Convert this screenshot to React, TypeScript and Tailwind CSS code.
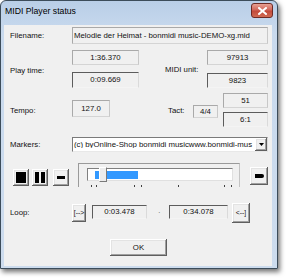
const font = "font-['Liberation_Sans',Arial,sans-serif]";

function Flat({ w, h, children, left }: { w: number; h: number; children?: React.ReactNode; left?: boolean }) {
  return (
    <div
      className={`flex items-center border border-t-[#a9a9a9] border-l-[#a9a9a9] border-r-[#c8c8c8] border-b-[#d4d4d4] bg-[#f0f0f0] leading-none whitespace-nowrap overflow-hidden ${left ? "justify-start pl-[1px]" : "justify-center"}`}
      style={{ width: w, height: h }}
    >
      {children}
    </div>
  );
}

function Sunken({ w, h, children }: { w: number; h: number; children?: React.ReactNode }) {
  return (
    <div
      className="flex items-center justify-center border border-t-[#5c5c5c] border-l-[#5c5c5c] border-r-[#dadada] border-b-[#f4f4f4] bg-[#f0f0f0] leading-none whitespace-nowrap"
      style={{ width: w, height: h }}
    >
      {children}
    </div>
  );
}

function Btn({ w, h, children }: { w: number; h: number; children?: React.ReactNode }) {
  return (
    <div
      className="flex items-center justify-center bg-[#f0f0f0] leading-none shadow-[inset_-1px_-1px_0_#5f5f5f,inset_1px_1px_0_#ffffff,inset_-2px_-2px_0_#a0a0a0,inset_2px_2px_0_#e3e3e3]"
      style={{ width: w, height: h }}
    >
      {children}
    </div>
  );
}

function Slider() {
  const ticks = [12, 17, 55, 62, 99, 145, 152];
  return (
    <div className="relative w-[162px] h-[24px] border-t border-l border-r border-t-[#9a9a9a] border-l-[#9a9a9a] border-r-[#c4c4c4]">
      <div className="relative ml-[8px] mt-[4px] w-[146px] h-[13px] bg-white border border-t-[#808080] border-l-[#808080] border-r-[#e0e0e0] border-b-[#e0e0e0]">
        <div className="ml-[7px] mt-[2px] w-[43px] h-[8px] bg-[#3399ff]" />
        <div className="absolute left-[11px] top-[-2px] w-[8px] h-[15px] bg-[#ececec] border border-t-[#ffffff] border-l-[#ffffff] border-r-[#7a7a7a] border-b-[#7a7a7a]" />
      </div>
      {ticks.map((x) => (
        <div key={x} className="absolute top-[21px] w-[1px] h-[2px] bg-[#404040]" style={{ left: x }} />
      ))}
    </div>
  );
}

export default function App() {
  return (
    <div className={`${font} w-[287px] h-[278px] bg-white overflow-hidden`}>
      <div className="w-[278px] h-[269px] rounded-t-[6px] border border-[#3c4c5a] bg-[linear-gradient(180deg,#b9cee7_0%,#c9daee_12%,#cddcee_100%)] shadow-[2px_3px_5px_rgba(0,0,0,0.55)] flex flex-col">
        <div className="h-[24px] flex items-start justify-between pl-[4px] pr-[4px]">
          <span className="mt-[6px] text-[8.7px] leading-none text-black">MIDI Player status</span>
          <div className="mt-[2px] w-[22px] h-[15px] rounded-[3px] border border-[#6e2a24] bg-[linear-gradient(180deg,#e8a093_0%,#d2675a_45%,#c24a3b_55%,#d06a52_100%)] flex items-center justify-center">
            <svg width="9" height="8" viewBox="0 0 9 8">
              <path d="M1 1 L8 7 M8 1 L1 7" stroke="#ffffff" strokeWidth="2" strokeLinecap="square" />
            </svg>
          </div>
        </div>
        <div className="ml-[3px] w-[268px] h-[241px] bg-[#f0f0f0] text-[7.8px] text-[#111111]">
          <div className="flex flex-col pt-[2px]">
            <div className="flex items-center h-[17px]">
              <div className="w-[68px] pl-[6px] leading-none">Filename:</div>
              <Flat w={196} h={17} left>
                Melodie der Heimat - bonmidi music-DEMO-xg.mid
              </Flat>
            </div>

            <div className="flex mt-[6px] h-[38px]">
              <div className="w-[68px] pl-[6px] mt-[17px] leading-none">Play time:</div>
              <div className="flex flex-col gap-[7px]">
                <Flat w={67} h={15}>1:36.370</Flat>
                <Sunken w={67} h={16}>0:09.669</Sunken>
              </div>
              <div className="ml-[26px] mt-[16px] w-[42px] leading-none">MIDI unit:</div>
              <div className="flex flex-col gap-[8px]">
                <Flat w={61} h={15}>97913</Flat>
                <Sunken w={61} h={15}>9823</Sunken>
              </div>
            </div>

            <div className="flex mt-[5px] h-[34px]">
              <div className="w-[68px] pl-[6px] mt-[14px] leading-none">Tempo:</div>
              <div className="mt-[7px]">
                <Flat w={38} h={17}>127.0</Flat>
              </div>
              <div className="ml-[58px] mt-[14px] w-[25px] leading-none">Tact:</div>
              <div className="mt-[12px]">
                <Flat w={25} h={13}>4/4</Flat>
              </div>
              <div className="ml-[5px] flex flex-col gap-[4px]">
                <Flat w={45} h={15}>51</Flat>
                <Sunken w={45} h={15}>6:1</Sunken>
              </div>
            </div>

            <div className="flex items-center mt-[10px] h-[15px]">
              <div className="w-[68px] pl-[6px] leading-none">Markers:</div>
              <div className="flex items-center w-[196px] h-[15px] bg-white border border-t-[#7a7a7a] border-l-[#7a7a7a] border-r-[#dcdcdc] border-b-[#e8e8e8]">
                <div className="flex-1 overflow-hidden whitespace-nowrap pl-[1px] leading-none">
                  (c) byOnline-Shop bonmidi musicwww.bonmidi-mus
                </div>
                <Btn w={12} h={13}>
                  <svg width="5" height="3" viewBox="0 0 5 3">
                    <path d="M0 0 H5 L2.5 3 Z" fill="#000000" />
                  </svg>
                </Btn>
              </div>
            </div>

            <div className="flex mt-[11px] h-[24px]">
              <div className="ml-[9px] mt-[6px]">
                <Btn w={16} h={17}>
                  <div className="w-[10px] h-[11px] bg-black" />
                </Btn>
              </div>
              <div className="ml-[3px] mt-[6px]">
                <Btn w={16} h={17}>
                  <div className="flex gap-[2px]">
                    <div className="w-[4px] h-[11px] bg-black" />
                    <div className="w-[4px] h-[11px] bg-black" />
                  </div>
                </Btn>
              </div>
              <div className="ml-[5px] mt-[6px]">
                <Btn w={16} h={17}>
                  <div className="w-[8px] h-[3px] bg-black" />
                </Btn>
              </div>
              <div className="ml-[9px]">
                <Slider />
              </div>
              <div className="ml-[10px] mt-[4px]">
                <Btn w={18} h={18}>
                  <div className="w-[9px] h-[4px] bg-black rounded-r-[2px]" />
                </Btn>
              </div>
            </div>

            <div className="flex mt-[16px] h-[20px]">
              <div className="w-[68px] pl-[6px] mt-[6px] leading-none">Loop:</div>
              <div className="mt-[1px]">
                <Btn w={14} h={18}>
                  <span className="text-[6.8px]">[--&gt;</span>
                </Btn>
              </div>
              <div className="ml-[6px] mt-[2px]">
                <Sunken w={55} h={14}>0:03.478</Sunken>
              </div>
              <div className="ml-[11px] mt-[6px] w-[11px] leading-none text-[#606060]">·</div>
              <div className="mt-[2px]">
                <Sunken w={59} h={14}>0:34.078</Sunken>
              </div>
              <div className="ml-[4px]">
                <Btn w={18} h={20}>
                  <span className="text-[6.8px]">&lt;--]</span>
                </Btn>
              </div>
            </div>

            <div className="flex mt-[16px] pl-[106px]">
              <Btn w={57} h={17}>OK</Btn>
            </div>
          </div>
        </div>
      </div>
    </div>
  );
}
